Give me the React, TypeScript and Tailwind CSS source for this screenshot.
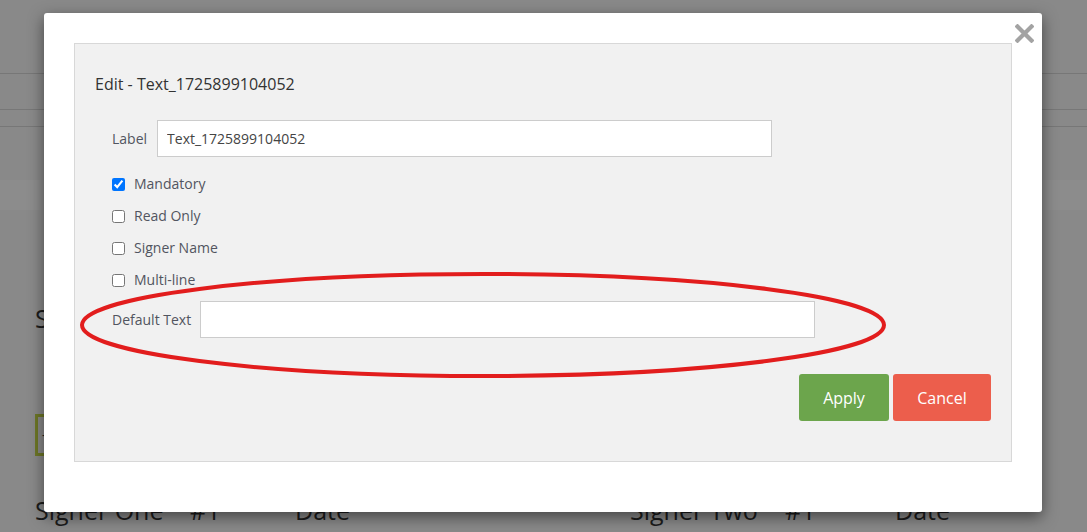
import React from "react";

const font = { fontFamily: '"Open Sans", "Liberation Sans", sans-serif' };

function CheckRow({ label, checked }: { label: string; checked?: boolean }) {
  return (
    <label className="flex h-8 items-center gap-[9px] text-sm text-[#515560]">
      <input type="checkbox" defaultChecked={checked} className="m-0 h-[13px] w-[13px] accent-[#0075ff]" />
      {label}
    </label>
  );
}

function BackgroundPage() {
  return (
    <div className="flex h-full flex-col text-[#1c1c1c]">
      <div className="h-[74px] shrink-0 border-b border-[#777]" />
      <div className="h-[36px] shrink-0 border-b border-[#777]" />
      <div className="h-[17px] shrink-0 border-b border-[#777]" />
      <div className="mt-[53px] h-[30px] shrink-0 bg-[#8c8c8c]" />
      <div className="mt-[92px] pl-[35px] text-[25px] leading-[32px]">Signature</div>
      <div className="mt-[80px] ml-[35px] flex h-[42px] w-[60px] items-center border-[3px] border-[#6d7727] pl-1 text-sm">
        -
      </div>
      <div className="mt-[38px] flex pl-[35px] text-[25px] leading-[32px]">
        <span className="w-[155px]">Signer One</span>
        <span className="w-[105px]">#1</span>
        <span className="w-[335px]">Date</span>
        <span className="w-[155px]">Signer Two</span>
        <span className="w-[110px]">#1</span>
        <span>Date</span>
      </div>
    </div>
  );
}

export default function App() {
  return (
    <div className="relative h-[532px] w-full overflow-hidden bg-[#898989]" style={font}>
      <BackgroundPage />

      <div className="absolute left-[44px] top-[13px] w-[998px] rounded-[3px] bg-white px-[30px] pt-[30px] pb-[50px] shadow-[0_5px_15px_rgba(0,0,0,0.5)]">
        <button className="absolute left-[971px] top-[11px] h-[19px] w-[19px]" aria-label="Close">
          <svg viewBox="0 0 19 19" className="h-[19px] w-[19px]">
            <path d="M2.5 2.5 L16.5 16.5 M16.5 2.5 L2.5 16.5" stroke="#a3a3a3" strokeWidth="4.2" strokeLinecap="square" />
          </svg>
        </button>

        <div className="h-[419px] border border-[#d8d8d8] bg-[#f1f1f1] pt-[29px] pl-5 pr-5">
          <h4 className="text-base leading-[22px] text-[#333]">Edit - Text_1725899104052</h4>

          <div className="ml-[17px] mt-[25px]">
            <div className="flex items-center gap-[10px]">
              <span className="text-sm text-[#515560]">Label</span>
              <input
                defaultValue="Text_1725899104052"
                className="h-[37px] w-[615px] border border-[#cccccc] bg-white px-[9px] text-sm text-[#444] outline-none"
              />
            </div>

            <div className="mt-[11px] flex flex-col">
              <CheckRow label="Mandatory" checked />
              <CheckRow label="Read Only" />
              <CheckRow label="Signer Name" />
              <CheckRow label="Multi-line" />
            </div>

            <div className="mt-[5px] flex items-center gap-[9px]">
              <span className="text-sm text-[#515560]">Default Text</span>
              <input className="h-[37px] w-[615px] border border-[#cccccc] bg-white px-[9px] text-sm outline-none" />
            </div>
          </div>

          <div className="mt-[36px] flex justify-end gap-1">
            <button className="h-[47px] w-[90px] rounded-[3px] bg-[#6ca54c] text-base text-white">Apply</button>
            <button className="h-[47px] w-[98px] rounded-[3px] bg-[#ec5e4c] text-base text-white">Cancel</button>
          </div>
        </div>
      </div>

      <svg className="pointer-events-none absolute inset-0 h-full w-full" viewBox="0 0 1087 532">
        <ellipse cx="483" cy="325" rx="401" ry="51" fill="none" stroke="#e21d1d" strokeWidth="4" />
      </svg>
    </div>
  );
}
